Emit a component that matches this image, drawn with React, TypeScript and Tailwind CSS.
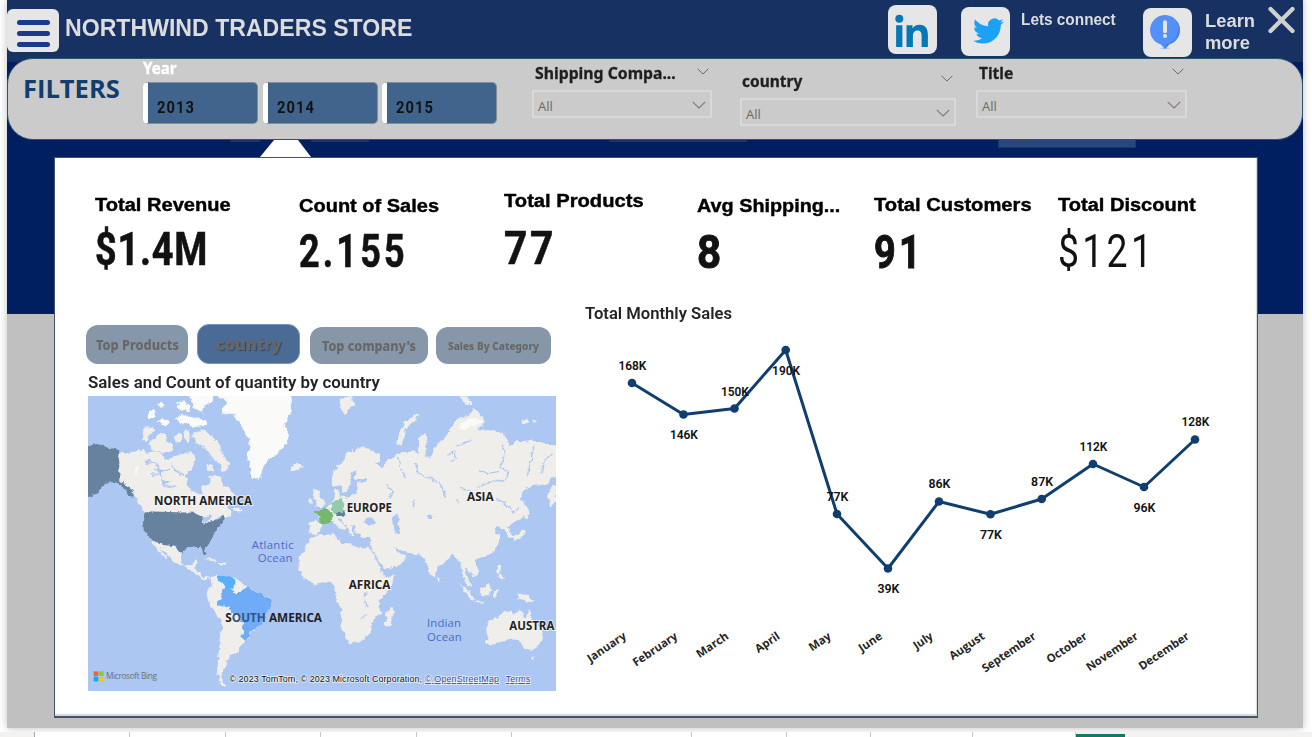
import { useLayoutEffect, useRef, type ReactNode } from "react";

/* Single line of text stretched or squeezed to a fixed width. */
function Fit({ w, className = "", children }: { w: number; className?: string; children: ReactNode }) {
  const ref = useRef<HTMLSpanElement>(null);
  useLayoutEffect(() => {
    const el = ref.current;
    if (el && el.offsetWidth) el.style.transform = `scaleX(${w / el.offsetWidth})`;
  }, [w]);
  return (
    <div className="h-fit overflow-visible" style={{ width: w }}>
      <span ref={ref} className={`block w-max origin-left whitespace-nowrap ${className}`}>
        {children}
      </span>
    </div>
  );
}

function Chevron({ small = false, className = "" }: { small?: boolean; className?: string }) {
  return (
    <svg
      viewBox="0 0 14 8"
      className={`${small ? "h-[7px] w-[12px] stroke-[#66625f]" : "h-[8px] w-[14px] stroke-[#85766c]"} shrink-0 fill-none ${className}`}
    >
      <path d="M.7.8 7 7 13.3.8" strokeWidth="1.1" />
    </svg>
  );
}

function Header() {
  return (
    <header className="flex h-[58px] items-start">
      <div className="mt-[9px] flex h-[43px] w-[52px] flex-col justify-center gap-[6px] rounded-[6px] bg-[#e6e6e6] pt-[6px] pl-[10px]">
        <div className="h-[5px] w-[33px] rounded-full bg-[#1a3a8c]" />
        <div className="h-[5px] w-[33px] rounded-full bg-[#1a3a8c]" />
        <div className="h-[5px] w-[33px] rounded-full bg-[#1a3a8c]" />
      </div>
      <div className="w-[828px] pt-[15px] pl-[6px]">
        <Fit w={347} className="font-['Liberation_Sans',sans-serif] text-[23.5px] leading-[27px] font-bold text-[#dcdcdc]">
          NORTHWIND TRADERS STORE
        </Fit>
      </div>
      <div className="mt-[5px] ml-px h-[49px] w-[49px] rounded-[8px] bg-[#e6e6e6]">
        <svg viewBox="0 0 49 49" className="h-[49px] w-[49px] fill-[#0878b5]">
          <circle cx="11.3" cy="13.7" r="4" />
          <path d="M8.1 20.3h6.3V42H8.1zM18.5 20.3h6v3c1.2-2 3.6-3.6 7-3.6 6.500 0 8.400 4.300 8.400 10.300v12h-6.300V31.400c0-3.600-.7-6-4-6-3.500 0-4.700 2.500-4.700 6V42h-6.400z" />
        </svg>
      </div>
      <div className="mt-[7px] ml-[24px] flex h-[49px] w-[49px] items-center justify-center rounded-[8px] bg-[#e6e6e6]">
        <svg viewBox="0 2 24 20" className="mb-[1px] ml-[5px] h-[26px] w-[31px] fill-[#1da1f2]">
          <path d="M23.950 4.570a10 10 0 0 1-2.820.770 4.960 4.960 0 0 0 2.160-2.720c-.950.550-2 .950-3.130 1.180a4.920 4.920 0 0 0-8.380 4.480C7.690 8.100 4.070 6.130 1.640 3.160a4.820 4.820 0 0 0-.670 2.480c0 1.710.870 3.210 2.190 4.100a4.900 4.900 0 0 1-2.230-.620v.060a4.920 4.920 0 0 0 3.950 4.830 5 5 0 0 1-2.210.080 4.940 4.940 0 0 0 4.600 3.420A9.870 9.870 0 0 1 0 19.540a14 14 0 0 0 7.550 2.210c9.050 0 14-7.500 14-13.990 0-.210 0-.420-.020-.630a9.900 9.900 0 0 0 2.420-2.560z" />
        </svg>
      </div>
      <div className="w-[133px] pt-[11px] pl-[11px]">
        <Fit w={95} className="font-['Liberation_Sans',sans-serif] text-[16px] leading-[18px] font-bold text-[#dcdcdc]">
          Lets connect
        </Fit>
      </div>
      <div className="mt-[8px] h-[49px] w-[49px] rounded-[8px] bg-[#e6e6e6]">
        <svg viewBox="0 0 49 49" className="h-[49px] w-[49px]">
          <ellipse cx="22" cy="40.300" rx="5" ry=".9" fill="#b7c8ea" />
          <path d="M22 7a15 15 0 0 1 4.500 29.300L22 41l-4.500-4.700A15 15 0 0 1 22 7z" fill="#5490f9" />
          <path d="M33 12a15 15 0 0 1-6.500 24.300L22 41v-4.500C34 34 38 22 33 12z" fill="#4a82f2" />
          <path d="M22 14.300v9" stroke="#e6e6e6" strokeWidth="4" strokeLinecap="round" />
          <circle cx="22" cy="28" r="2" fill="#e6e6e6" />
        </svg>
      </div>
      <div className="w-[76px] pt-[10px] pl-[13px] font-['Liberation_Sans',sans-serif] text-[18px] leading-[22px] font-bold text-[#dcdcdc]">
        <Fit w={50}>Learn</Fit>
        <Fit w={45}>more</Fit>
      </div>
      <svg viewBox="0 0 28 28" className="mt-[6px] h-[28px] w-[28px]">
        <path d="M2.500 3 24.500 25M24.500 3 2.500 25" stroke="#d0d0d0" strokeWidth="4.300" strokeLinecap="round" />
      </svg>
    </header>
  );
}

function YearTile({ year }: { year: string }) {
  return (
    <div className="flex h-[42px] w-[115px] items-center rounded-[5px] border border-l-[5px] border-[#7f8f9e] border-l-white bg-[#40648b] pt-[8px] pl-[9px]">
      <Fit w={38} className="font-['Roboto',sans-serif] text-[17px] leading-[20px] font-bold tracking-[1.2px] text-[#121212]">
        {year}
      </Fit>
    </div>
  );
}

function Dropdown({ label, labelW, labelCls, boxCls, chevCls, rootCls }: {
  label: string; labelW: number; labelCls: string; boxCls: string; chevCls: string; rootCls: string;
}) {
  return (
    <div className={rootCls}>
      <div className={`flex h-[20px] items-start justify-between ${labelCls}`}>
        <Fit w={labelW} className="font-['Noto_Sans',sans-serif] text-[16px] leading-[19px] font-bold text-[#1f1f1f] [-webkit-text-stroke:0.3px_#1f1f1f]">
          {label}
        </Fit>
        <Chevron small className={chevCls} />
      </div>
      <div className={`flex h-[28px] items-center justify-between border-2 border-[#d9d9d9] pr-[4px] pl-[4px] ${boxCls}`}>
        <Fit w={15} className="pt-[3px] font-['Open_Sans',sans-serif] text-[13px] leading-[18px] text-[#6a6a6a]">All</Fit>
        <Chevron className="mt-[1px]" />
      </div>
    </div>
  );
}

function Filters() {
  return (
    <section className="flex h-[82px] w-[1296px] items-start rounded-[26px] border border-[#2e5270] bg-[#cbcbcb]">
      <div className="w-[134px] pt-[13px] pl-[15px]">
        <Fit w={97} className="font-['Open_Sans',sans-serif] text-[25.500px] leading-[32px] font-bold text-[#103e6e]">FILTERS</Fit>
      </div>
      <div className="w-[390px] pl-px">
        <Fit w={34} className="font-['Noto_Sans',sans-serif] text-[16px] leading-[19px] font-bold text-white [-webkit-text-stroke:0.4px_white]">Year</Fit>
        <div className="mt-[4px] flex gap-[4.500px]">
          <YearTile year="2013" />
          <YearTile year="2014" />
          <YearTile year="2015" />
        </div>
      </div>
      <Dropdown rootCls="w-[180px] pt-[5px]" label="Shipping Compa..." labelW={141} labelCls="pl-[3px] pr-[3px]" chevCls="mt-[4px]" boxCls="mt-[6px]" />
      <Dropdown rootCls="ml-[28px] w-[216px] pt-[13px]" label="country" labelW={60} labelCls="pl-[2px] pr-[3px]" chevCls="mt-[3px]" boxCls="mt-[6px]" />
      <Dropdown rootCls="ml-[20px] w-[211px] pt-[5px]" label="Title" labelW={34} labelCls="pl-[3px] pr-[3px]" chevCls="mt-[4px]" boxCls="mt-[6px]" />
    </section>
  );
}

function Connector() {
  return (
    <div className="flex h-[17px] items-start">
      <div className="ml-[223px] h-[2px] w-[30px] bg-[#1c3566]" />
      <svg viewBox="0 0 51 17" className="h-[17px] w-[51px] fill-white">
        <path d="M14 0h24l13 17H0z" />
      </svg>
      <div className="h-[2px] w-[58px] bg-[#1c3566]" />
      <div className="ml-[240px] h-[2px] w-[138px] bg-[#1c3566]" />
      <div className="ml-[251px] flex h-[8px] w-[138px] border border-t-0 border-[#1b3768] bg-[#29477e]">
        <div className="ml-[20px] h-[1px] w-[8px] bg-[#3b4357]" />
      </div>
    </div>
  );
}

const kpis = [
  { t: "Total Revenue", tw: 136, v: "$1.4M", vw: 113, col: "w-[204px] pt-[37px]", wt: "mt-[12px] font-bold tracking-[1px] [-webkit-text-stroke:0.6px_#121212]" },
  { t: "Count of Sales", tw: 140, v: "2.155", vw: 109, col: "w-[205px] pt-[38px]", wt: "mt-[13px] font-bold tracking-[4px] [-webkit-text-stroke:0.6px_#121212]" },
  { t: "Total Products", tw: 140, v: "77", vw: 52, col: "w-[193px] pt-[33px]", wt: "mt-[15px] font-bold tracking-[3px] [-webkit-text-stroke:0.6px_#121212]" },
  { t: "Avg Shipping...", tw: 143, v: "8", vw: 25, col: "w-[177px] pt-[38px]", wt: "mt-[14px] font-bold tracking-[1px] [-webkit-text-stroke:1px_#121212]" },
  { t: "Total Customers", tw: 158, v: "91", vw: 50, col: "w-[184px] pt-[37px]", wt: "mt-[15px] font-bold tracking-[4px] [-webkit-text-stroke:1px_#121212]" },
  { t: "Total Discount", tw: 138, v: "$121", vw: 97, col: "w-[150px] pt-[37px]", wt: "mt-[14px] font-normal tracking-[4px]" },
];

function Kpis() {
  return (
    <div className="flex h-[145px] pl-[40px]">
      {kpis.map((k) => (
        <div key={k.t} className={k.col}>
          <Fit w={k.tw} className="font-['Liberation_Sans',sans-serif] text-[18px] leading-[20px] font-bold text-black [-webkit-text-stroke:0.4px_black]">
            {k.t}
          </Fit>
          <div className={k.wt}>
            <Fit w={k.vw} className="font-['Roboto',sans-serif] text-[45.500px] leading-[46px] text-[#121212]">{k.v}</Fit>
          </div>
        </div>
      ))}
    </div>
  );
}

function WorldMap() {
  const label = "fill-[#222] font-['Open_Sans',sans-serif] text-[37px] font-bold";
  const sea = "fill-[#4b6cc9] font-['Open_Sans',sans-serif] text-[34px]";
  const halo = { stroke: "#f6f6f4", strokeWidth: 6, paintOrder: "stroke", strokeOpacity: 0.75 };
  const fit = { lengthAdjust: "spacingAndGlyphs" as const };
  return (
    <svg viewBox="12 12 1404 885" className="block h-[295px] w-[468px]">
      <defs>
        <filter id="coast" x="0" y="0" width="1" height="1" filterUnits="objectBoundingBox">
          <feTurbulence type="fractalNoise" baseFrequency="0.06" numOctaves="3" seed="4" />
          <feDisplacementMap in="SourceGraphic" scale="17" xChannelSelector="R" yChannelSelector="G" />
        </filter>
      </defs>
      <rect x="12" y="12" width="1404" height="885" fill="#acc7f2" />
      <g filter="url(#coast)">
        <rect x="-20" y="-20" width="1470" height="950" fill="#acc7f2" />
        <g fill="#efeeeb">
          {/* Canada and the arctic islands */}
          <path d="M104 178 135 185 165 170 185 182 215 178 235 190 250 205 280 190 300 185 325 180 335 200 325 235 305 245 308 280 325 295 345 310 358 308 355 285 380 275 372 252 395 250 410 260 415 280 440 290 448 312 430 345 440 360 430 380 415 372 385 385 360 398 330 366 180 360 165 335 150 300 115 270 104 268Z" />
          <path d="M172 118 185 105 205 108 212 120 195 130 192 148 176 142ZM195 152 225 125 245 130 250 150 268 160 262 175 240 182 215 178 202 168ZM270 130 290 122 295 145 280 155ZM300 118 318 115 315 150 300 140ZM325 130 345 115 375 120 390 140 405 150 408 175 425 195 435 215 430 238 412 238 405 215 385 200 372 175 350 160 335 150ZM300 195 318 190 330 205 318 220 304 212ZM370 215 390 220 385 238 368 232Z" />
          <path d="M440 350 462 345 475 360 455 362ZM618 225 632 215 650 216 654 228 636 238 622 236Z" />
          {/* Central America and the Caribbean */}
          <path d="M203 447 220 452 245 458 270 462 290 482 292 505 300 520 322 520 335 505 342 512 330 528 350 545 355 555 378 556 372 565 350 558 340 545 300 525 270 510 245 480 225 462 248 500 240 498 215 465ZM362 498 390 500 400 510 380 506ZM405 510 428 512 425 518 405 518Z" />
          {/* South America */}
          <path d="M375 560 400 548 455 560 480 575 495 590 530 605 560 620 562 640 545 670 530 700 505 715 490 745 465 765 465 780 440 790 430 810 425 825 415 840 412 860 428 882 410 878 400 850 402 800 410 740 415 690 395 665 370 620 372 600 385 580Z" />
          {/* Africa and Madagascar */}
          <path d="M690 432 750 424 760 440 775 455 800 460 830 468 852 462 862 475 880 510 895 545 905 556 933 552 925 575 885 625 888 665 865 690 858 720 840 745 800 755 788 745 770 700 772 650 755 615 750 580 735 570 690 575 660 560 643 530 645 500 665 465 680 440ZM908 655 925 648 930 660 918 705 905 712 902 695Z" />
          {/* British Isles, Iberia, Scandinavia */}
          <path d="M695 290 708 300 706 318 722 335 712 345 692 345 698 325 690 310ZM676 318 688 320 686 335 674 334ZM676 395 695 388 714 395 708 420 695 430 678 425Z" />
          <path d="M745 285 743 262 750 235 775 210 790 185 825 165 850 168 885 185 893 205 870 215 862 252 835 262 812 260 815 235 802 240 800 270 785 300 776 302 770 280Z" />
          {/* Eurasia */}
          <path d="M708 392 700 362 720 350 740 335 752 318 752 292 765 298 768 315 800 312 815 305 822 285 818 272 850 264 855 240 855 210 895 225 912 205 940 185 985 178 1005 185 1005 140 1020 122 1030 150 1025 190 1040 200 1050 165 1065 150 1090 130 1100 110 1110 90 1150 70 1165 50 1195 70 1203 95 1180 112 1250 118 1270 140 1275 160 1300 145 1325 150 1350 145 1375 155 1430 158 1430 250 1400 258 1385 275 1340 280 1315 300 1310 320 1330 345 1320 375 1290 390 1270 400 1285 425 1292 436 1280 442 1262 415 1240 402 1232 420 1248 432 1240 455 1232 475 1215 488 1190 495 1172 505 1184 530 1182 548 1168 552 1155 540 1143 525 1148 560 1162 585 1150 582 1138 550 1130 515 1115 498 1105 488 1090 500 1060 530 1058 552 1050 560 1040 548 1028 520 1018 495 1005 488 960 480 930 465 940 480 970 492 955 515 905 535 890 515 870 480 855 455 862 445 858 435 830 434 815 420 812 405 800 395 812 430 800 428 785 400 772 380 760 382 788 408 778 416 745 388 725 392Z" />
          {/* Novaya Zemlya, Svalbard and the far north */}
          <path d="M940 160 945 120 965 90 1000 65 1010 70 980 95 962 118 955 150 948 162ZM765 20 800 12 815 40 795 45 782 70 770 45ZM1125 12 1150 14 1166 35 1150 38ZM1310 85 1330 82 1335 92 1312 97ZM1342 82 1362 88 1350 94Z" />
          {/* East and south-east Asia */}
          <path d="M1400 290 1416 275 1416 330 1402 345 1392 315ZM1325 345 1335 365 1330 385 1322 365ZM1320 410 1322 425 1300 440 1285 448 1290 436ZM1240 520 1252 522 1248 545 1260 555 1250 560 1238 540ZM1130 576 1150 590 1172 622 1165 626 1145 605ZM1175 625 1200 628 1195 632 1172 630ZM1188 595 1215 575 1222 590 1212 612 1192 608ZM1230 595 1245 592 1240 615 1230 618ZM1300 608 1330 608 1350 630 1325 628 1305 618ZM1060 560 1066 560 1066 570 1060 568Z" />
          {/* Australia */}
          <path d="M1208 692 1240 675 1260 660 1280 655 1290 665 1305 655 1318 665 1325 682 1332 650 1345 680 1365 705 1375 720 1372 750 1355 775 1340 776 1318 770 1308 745 1285 742 1250 750 1220 756 1208 750 1212 730ZM1340 792 1352 792 1346 806Z" />
        </g>
        <g fill="#fafaf9">
          <path d="M402 12 430 30 410 50 412 65 450 65 470 95 490 140 500 165 488 185 502 235 502 258 528 260 535 230 550 205 580 185 605 160 615 130 600 100 622 60 620 40 630 -10 400 -10Z" />
          <path d="M310 -5 345 12 390 0 385 30 360 40 355 60 330 50ZM275 35 300 28 320 45 315 60 285 55ZM188 68 205 50 215 60 210 78 190 78ZM220 88 240 78 255 88 250 100 230 98ZM272 85 290 65 320 75 365 85 370 98 330 102 300 92ZM222 35 238 28 242 40 226 48ZM155 230 165 222 165 250 156 250ZM1120 105 1158 78 1200 88 1170 100 1140 110Z" />
        </g>
        {/* Inland seas, lakes and rivers */}
        <g fill="#acc7f2">
          <path d="M838 388 852 375 868 382 878 395 855 398 840 400ZM922 372 938 366 948 380 940 395 948 425 935 428 928 400Z" />
          <path d="M180 205 198 200 195 218ZM210 230 240 235 230 250ZM230 262 260 270 240 275ZM300 150 330 170 310 180ZM838 600 848 598 846 610 838 608ZM1030 370 1048 372 1045 382 1030 380Z" />
          <path d="M355 378 380 370 375 385 360 395Z" />
        </g>
        <g fill="none" stroke="#acc7f2" strokeWidth="4">
          <path d="M998 212 1002 245 1040 262 1065 270 1080 295 1085 320M1255 155 1262 190 1248 225 1275 240 1265 262 1210 272 1180 288M1180 238 1205 245 1248 238M1090 190 1110 180 1120 200 1100 205M1118 160 1150 150 1162 140M1350 160 1340 210 1330 250M1405 185 1380 210 1370 245M940 195 950 230 965 262M1125 330 1115 320M1240 322 1265 335 1290 360 1310 345M185 215 215 210 225 235 255 235M200 245 230 250 240 280 275 285M260 215 280 240 300 250M840 600 842 630 852 645M828 680 850 670M905 280 925 300 915 320M990 320 985 345M1130 290 1160 295" />
        </g>
        {/* Highlighted countries */}
        <path d="M-5 165 38 153 65 165 106 175 106 268 118 272 140 290 152 310 145 318 122 290 95 270 70 272 50 290 35 305 -5 322Z" fill="#66829f" />
        <path d="M182 358 330 362 355 375 358 398 385 385 412 380 416 367 426 378 410 400 395 415 385 440 375 448 362 468 368 488 360 487 350 465 310 465 292 482 272 462 245 460 225 452 203 445 180 420 176 395Z" fill="#66829f" />
        <path d="M412 596 430 590 450 600 470 600 490 585 500 595 530 605 560 622 562 640 545 670 532 700 505 712 485 750 468 735 480 715 470 685 440 655 430 645 400 640 396 630 412 620Z" fill="#70abf7" />
        <path d="M400 550 450 556 455 575 440 595 425 590 420 570 402 568Z" fill="#5aaffb" />
        <path d="M692 358 712 354 726 344 742 362 746 376 742 392 724 396 706 394 706 374Z" fill="#74ba6c" />
        <path d="M744 330 770 318 778 338 774 355 780 362 750 366 740 350Z" fill="#95c9ab" />
        <path d="M754 364 786 358 784 370 762 373Z" fill="#5c7f9f" />
      </g>
      <g {...halo}>
        <text {...fit} x="210" y="340" textLength="294" className={label}>NORTH AMERICA</text>
        <text {...fit} x="788" y="360" textLength="136" className={label}>EUROPE</text>
        <text {...fit} x="1149" y="328" textLength="80" className={label}>ASIA</text>
        <text {...fit} x="794" y="591" textLength="125" className={label}>AFRICA</text>
        <text {...fit} x="1276" y="715" textLength="135" className={label}>AUSTRA</text>
      </g>
      <text {...fit} x="424" y="689" textLength="290" className={label}>
        S<tspan fill="#33567f">OUTH</tspan> AMERICA
      </text>
      <g>
        <text x="503" y="471" textLength="126" className={sea}>Atlantic</text>
        <text x="521" y="510" textLength="104" className={sea}>Ocean</text>
        <text x="1029" y="705" textLength="102" className={sea}>Indian</text>
        <text x="1029" y="747" textLength="104" className={sea}>Ocean</text>
      </g>
      <rect x="29" y="838" width="14" height="14" fill="#f26522" />
      <rect x="45" y="838" width="14" height="14" fill="#8dc63f" />
      <rect x="29" y="854" width="14" height="14" fill="#00aeef" />
      <rect x="45" y="854" width="14" height="14" fill="#ffc20e" />
      <text x="66" y="861" textLength="153" className="fill-[#6c7078] font-['Open_Sans',sans-serif] text-[25px]">Microsoft Bing</text>
      <g className="font-['Liberation_Sans',sans-serif] text-[27px]" stroke="#f4f6fa" strokeWidth="5" strokeOpacity=".8" paintOrder="stroke">
        <text x="436" y="870" textLength="578" fill="#111">© 2023 TomTom, © 2023 Microsoft Corporation,</text>
        <text x="1023" y="870" textLength="222" fill="#3a4f9b" textDecoration="underline">© OpenStreetMap</text>
        <text x="1265" y="870" textLength="74" fill="#3a4f9b" textDecoration="underline">Terms</text>
      </g>
    </svg>
  );
}

const tabs = [
  { t: "Top Products", w: 83, box: "h-[39px] w-[102px] bg-[#8697aa]", cls: "text-[13.500px]" },
  { t: "country", w: 65, box: "ml-[9px] h-[40px] w-[103px] border border-[#7795ba] bg-[#4a6b96]", cls: "text-[16px] [text-shadow:1px_1px_1px_#2f4566] [-webkit-text-stroke:0.4px_#696766]" },
  { t: "Top company's", w: 94, box: "ml-[10px] h-[37px] w-[118px] bg-[#8697aa]", cls: "text-[13.500px]" },
  { t: "Sales By Category", w: 91, box: "ml-[8px] h-[37px] w-[115px] bg-[#8697aa]", cls: "text-[11px]" },
];

function MapSection() {
  return (
    <div className="w-[530px] pt-[20px] pl-[31px]">
      <div className="flex h-[41px] items-end">
        {tabs.map((tab) => (
          <div key={tab.t} className={`flex items-center justify-center rounded-[12px] ${tab.box}`}>
            <Fit w={tab.w} className={`font-['Noto_Sans',sans-serif] leading-[20px] font-extrabold text-[#696766] ${tab.cls}`}>
              {tab.t}
            </Fit>
          </div>
        ))}
      </div>
      <div className="pt-[9px] pl-[2px]">
        <Fit w={292} className="font-['Roboto',sans-serif] text-[16px] leading-[20px] font-semibold text-[#252423]">
          Sales and Count of quantity by country
        </Fit>
        <div className="mt-[3px]">
          <WorldMap />
        </div>
      </div>
    </div>
  );
}

const points = [
  { m: "January", v: "168K", x: 632, y: 383, ly: 370 },
  { m: "February", v: "146K", x: 683.5, y: 414.5, ly: 439 },
  { m: "March", v: "150K", x: 734.5, y: 408.5, ly: 396 },
  { m: "April", v: "190K", x: 785.7, y: 350, ly: 375 },
  { m: "May", v: "77K", x: 837, y: 514, ly: 501 },
  { m: "June", v: "39K", x: 888, y: 568.5, ly: 593 },
  { m: "July", v: "86K", x: 939, y: 501.5, ly: 488 },
  { m: "August", v: "77K", x: 990.5, y: 514.3, ly: 539 },
  { m: "September", v: "87K", x: 1041.7, y: 499, ly: 486 },
  { m: "October", v: "112K", x: 1093, y: 464, ly: 451 },
  { m: "November", v: "96K", x: 1144, y: 487, ly: 512 },
  { m: "December", v: "128K", x: 1195, y: 439.5, ly: 426 },
];

function SalesChart() {
  return (
    <div className="pt-[1px]">
      <Fit w={147} className="font-['Roboto',sans-serif] text-[16.500px] leading-[20px] font-semibold text-[#252423]">
        Total Monthly Sales
      </Fit>
      <svg viewBox="575 324 670 376" className="-ml-[10px] block h-[376px] w-[670px]">
        <polyline points={points.map((p) => `${p.x},${p.y}`).join(" ")} fill="none" stroke="#103e6e" strokeWidth="3" strokeLinejoin="round" />
        {points.map((p) => (
          <g key={p.m}>
            <circle cx={p.x} cy={p.y} r="4.300" fill="#103e6e" />
            <text x={p.x + 0.4} y={p.ly} textAnchor="middle" textLength={p.v.length === 4 ? 28 : 22} lengthAdjust="spacingAndGlyphs" className="fill-[#111] font-['Roboto',sans-serif] text-[12.500px] font-semibold">
              {p.v}
            </text>
            <text transform={`translate(${p.x - 5} 638) rotate(-34)`} textAnchor="end" className="fill-[#252423] font-['Open_Sans',sans-serif] text-[11.400px] font-bold">
              {p.m}
            </text>
          </g>
        ))}
      </svg>
    </div>
  );
}

function SheetTabs() {
  return (
    <footer className="flex h-[5px] bg-[#f3f2f1]">
      <div className="w-[34px]" />
      <div className="flex bg-white">
        <div className="w-[95px] border-l border-[#a8a8a8]" />
        <div className="w-[96px] border-l border-[#c8c8c8]" />
        <div className="w-[95px] border-l border-[#c8c8c8]" />
        <div className="w-[96px] border-l border-[#c8c8c8]" />
        <div className="w-[95px] border-l border-[#c8c8c8]" />
        <div className="w-[180px] border-l border-[#c8c8c8]" />
        <div className="w-[95px] border-l border-[#c8c8c8]" />
        <div className="w-[84px] border-l border-[#c8c8c8]" />
        <div className="w-[102px] border-l border-[#c8c8c8]" />
        <div className="w-[104px] border-x border-[#c8c8c8]" />
      </div>
      <div className="mt-[2px] w-[49px] bg-[#117865]" />
    </footer>
  );
}

export default function App() {
  return (
    <div className="flex h-[737px] w-[1312px] flex-col overflow-hidden bg-white">
      <div className="mx-[7px] grid h-[728px] w-[1296px] shadow-[0_0_8px_rgba(0,0,0,0.25)]">
        <div className="col-start-1 row-start-1 flex flex-col bg-[#c0c0c0]">
          <div className="h-[62px] bg-[#173163]" />
          <div className="h-[252px] bg-[#001f60]" />
        </div>
        <div className="col-start-1 row-start-1 flex flex-col">
          <Header />
          <Filters />
          <Connector />
          <main className="ml-[47px] h-[561px] w-[1204px] border border-b-2 border-[#46536e] bg-white shadow-[inset_-1px_-2px_1px_#d8d8d8]">
            <Kpis />
            <div className="flex">
              <MapSection />
              <SalesChart />
            </div>
          </main>
        </div>
      </div>
      <div className="h-[4px]" />
      <SheetTabs />
    </div>
  );
}
